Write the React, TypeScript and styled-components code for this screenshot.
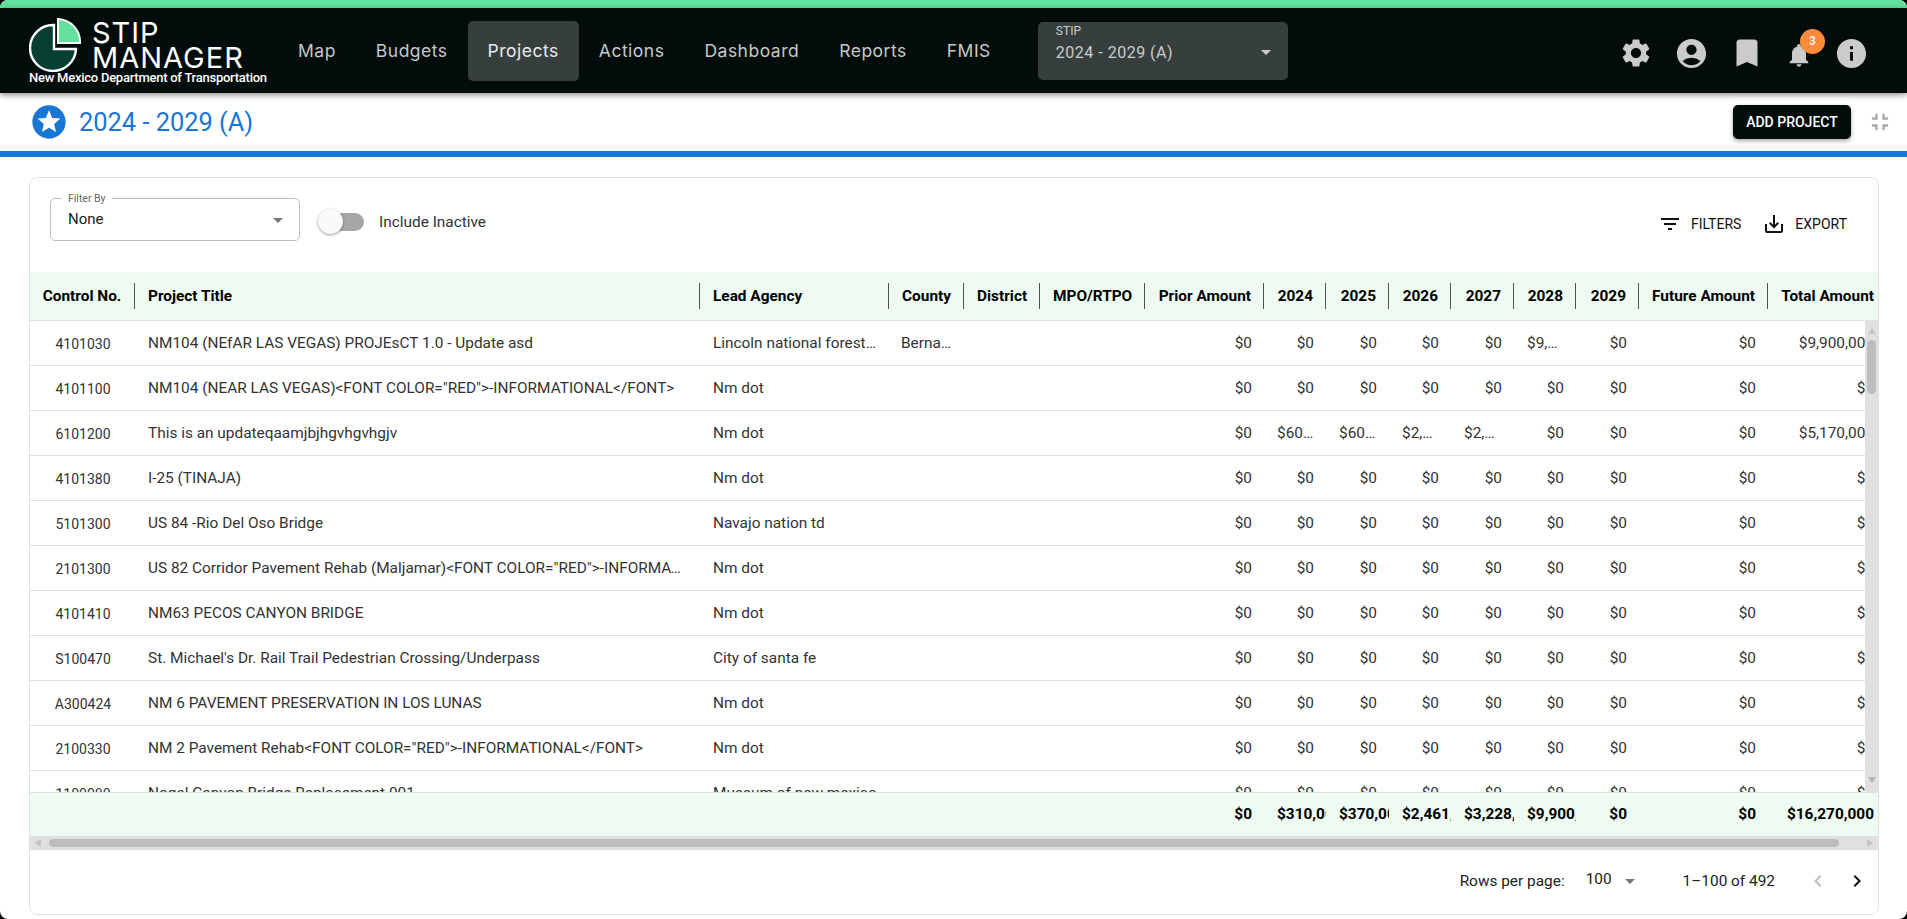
import styled, { createGlobalStyle } from 'styled-components';
import {
    MdAccountCircle,
    MdArrowDropDown,
    MdBookmark,
    MdChevronLeft,
    MdChevronRight,
    MdFilterList,
    MdFullscreenExit,
    MdInfo,
    MdNotifications,
    MdSaveAlt,
    MdSettings,
    MdStars,
} from 'react-icons/md';

const DARK = '#020c0a';
const BLUE = '#1976d2';
const MINT = '#edfbf3';
const LINE = '#e0e0e0';

const GlobalStyle = createGlobalStyle`
    html, body {
        margin: 0;
        height: 100%;
        overflow: hidden;
        background: #000;
    }
    * {
        box-sizing: border-box;
    }
`;

const Frame = styled.div`
    width: 1907px;
    height: 919px;
    border-radius: 8px;
    overflow: hidden;
    background: #fff;
    font-family: Roboto, 'Liberation Sans', sans-serif;
    display: flex;
    flex-direction: column;
`;

const TopStripe = styled.div`
    height: 8px;
    flex: none;
    background: #62e29d;
`;

const NavBar = styled.header`
    height: 85px;
    flex: none;
    display: flex;
    align-items: center;
    background: ${DARK};
    box-shadow: 0 2px 6px rgba(0, 0, 0, 0.45);
    position: relative;
    z-index: 2;
`;

const Brand = styled.div`
    width: 278px;
    flex: none;
    align-self: flex-start;
    display: flex;
    flex-direction: column;
    padding: 10px 0 0 29px;
`;

const BrandTop = styled.div`
    display: flex;
    gap: 11px;
`;

const BrandName = styled.div`
    font-family: Inter, sans-serif;
    font-size: 29px;
    line-height: 25px;
    letter-spacing: 1px;
    font-weight: 400;
    color: #fff;
    padding-top: 2px;
`;

const BrandSub = styled.div`
    margin-top: -2px;
    font-size: 13px;
    font-weight: 500;
    line-height: 16px;
    letter-spacing: -0.25px;
    white-space: nowrap;
    color: #fff;
`;

const NavLinks = styled.nav`
    display: flex;
    align-items: center;
`;

const NavLink = styled.a<{ $active?: boolean }>`
    height: 60px;
    padding: 0 20px;
    display: flex;
    align-items: center;
    border-radius: 5px;
    font-family: Inter, sans-serif;
    font-size: 17.5px;
    letter-spacing: 0.5px;
    color: ${(props) => (props.$active ? '#e9ecec' : '#c6c8c8')};
    background: ${(props) => (props.$active ? '#373f3e' : 'transparent')};
`;

const StipSelect = styled.div`
    width: 250px;
    height: 58px;
    margin-left: 27px;
    padding: 3px 10px 0 18px;
    display: flex;
    align-items: center;
    justify-content: space-between;
    border-radius: 5px;
    background: #373f3e;
    color: #c9cccc;
`;

const StipText = styled.div`
    display: flex;
    flex-direction: column;
    margin-bottom: 16px;
`;

const StipLabel = styled.span`
    font-size: 12px;
    line-height: 15px;
    margin-bottom: 4px;
`;

const StipValue = styled.span`
    font-size: 16px;
    line-height: 20px;
    letter-spacing: 0.5px;
    margin-bottom: 2px;
`;

const NavIcons = styled.div`
    margin-left: auto;
    margin-right: 38px;
    margin-top: 5px;
    display: flex;
    align-items: center;
    color: #cbcbcb;
`;

const NavIcon = styled.div<{ $size: number; $gap: number; $drop?: number }>`
    position: relative;
    display: flex;
    font-size: ${(props) => props.$size}px;
    margin-left: ${(props) => props.$gap}px;
    margin-top: ${(props) => props.$drop || 0}px;
`;

const Badge = styled.span`
    position: absolute;
    top: -12px;
    right: -12px;
    width: 25px;
    height: 25px;
    border-radius: 50%;
    background: #ff8a3a;
    color: #fff;
    font-size: 12px;
    font-weight: 500;
    display: flex;
    align-items: center;
    justify-content: center;
`;

const TitleBar = styled.div`
    height: 58px;
    flex: none;
    display: flex;
    align-items: center;
    padding: 0 13px 0 30px;
`;

const PageTitle = styled.h1`
    margin: 0 0 0 13px;
    font-size: 25.4px;
    font-weight: 400;
    color: ${BLUE};
`;

const StarIcon = styled(MdStars)`
    color: ${BLUE};
    font-size: 40px;
    margin-left: -1px;
    margin-right: -3px;
`;

const AddButton = styled.button`
    margin-left: auto;
    height: 34px;
    width: 118px;
    padding: 0;
    border: none;
    border-radius: 5px;
    background: ${DARK};
    color: #fff;
    font-family: inherit;
    font-size: 14px;
    font-weight: 500;
    box-shadow: 0 2px 4px rgba(0, 0, 0, 0.35);
`;

const CollapseIcon = styled(MdFullscreenExit)`
    margin-left: 15px;
    font-size: 28px;
    color: #aaa;
`;

const BlueRule = styled.div`
    height: 6px;
    flex: none;
    background: ${BLUE};
`;

const Content = styled.main`
    flex: 1;
    min-height: 0;
    padding: 20px 28px 4px 29px;
`;

const Card = styled.section`
    height: 100%;
    border: 1px solid ${LINE};
    border-radius: 8px;
    overflow: hidden;
    display: flex;
    flex-direction: column;
`;

const CardToolbar = styled.div`
    height: 94px;
    flex: none;
    display: flex;
    padding: 20px 31px 0 20px;
`;

const SelectBox = styled.div`
    position: relative;
    width: 250px;
    height: 43px;
    padding: 0 9px 2px 17px;
    display: flex;
    align-items: center;
    justify-content: space-between;
    border: 1px solid #bdbdbd;
    border-radius: 5px;
    font-size: 15px;
    color: #212121;
`;

const SelectCaret = styled(MdArrowDropDown)`
    font-size: 24px;
    color: #757575;
    margin-top: 3px;
`;

const SelectLegend = styled.span`
    position: absolute;
    top: -6px;
    left: 11px;
    padding: 0 6px;
    background: #fff;
    font-size: 10.5px;
    line-height: 12px;
    color: #666;
`;

const SwitchField = styled.div`
    display: flex;
    align-items: center;
    height: 47px;
    margin-left: 18px;
    font-size: 15.4px;
    color: #333;
`;

const Track = styled.div`
    position: relative;
    width: 46px;
    height: 18px;
    margin-right: 15px;
    border-radius: 9px;
    background: #a6a6a6;
`;

const Knob = styled.span`
    position: absolute;
    top: -4px;
    left: 0;
    width: 25px;
    height: 25px;
    border-radius: 50%;
    background: #fafafa;
    box-shadow: 0 1px 3px rgba(0, 0, 0, 0.4);
`;

const ToolActions = styled.div`
    margin-left: auto;
    height: 52px;
    display: flex;
    align-items: center;
    gap: 21px;
`;

const ToolAction = styled.div`
    display: flex;
    align-items: center;
    gap: 9px;
    font-size: 14px;
    color: #111;

    svg {
        font-size: 24px;
    }
`;

const GRID = '105px 565px 189px 75px 76px 105px 119px 62px 63px 62px 63px 62px 63px 129px 118px';

const TableArea = styled.div`
    flex: 1;
    min-height: 0;
    display: flex;
    flex-direction: column;
`;

const HeadRow = styled.div`
    height: 49px;
    flex: none;
    display: grid;
    grid-template-columns: ${GRID};
    background: ${MINT};
    border-bottom: 1px solid ${LINE};
`;

const HeadCell = styled.div`
    display: flex;
    align-items: center;
    min-width: 0;
    font-size: 15.4px;
    font-weight: 700;
    color: #000;
`;

const HeadLabel = styled.span<{ $align: string }>`
    flex: 1;
    padding: 0 ${(props) => (props.$align === 'center' ? '0' : '12px')} 0
        ${(props) => (props.$align === 'center' ? '0' : '13px')};
    text-align: ${(props) => props.$align};
    white-space: nowrap;
    overflow: hidden;
`;

const HeadDivider = styled.i`
    flex: none;
    width: 1px;
    height: 26px;
    background: #555;
`;

const BodyPane = styled.div`
    position: relative;
    height: 471px;
    flex: none;
    overflow: hidden;
`;

const Row = styled.div`
    height: 45px;
    display: grid;
    grid-template-columns: ${GRID};
    border-bottom: 1px solid ${LINE};
`;

const Cell = styled.div<{ $align: string }>`
    min-width: 0;
    padding: 0 12px 0 13px;
    line-height: 44px;
    font-size: 15.4px;
    color: #333;
    text-align: ${(props) => props.$align};
    white-space: nowrap;
    overflow: hidden;
    text-overflow: ellipsis;
`;

const NoCell = styled(Cell)`
    line-height: 46px;
    font-size: 14px;
`;

const CountyCell = styled(Cell)`
    padding: 0 10px 0 12px;
`;

const VScroll = styled.div`
    position: absolute;
    top: 0;
    right: 0;
    bottom: 0;
    width: 13px;
    background: #e0e0e0;
`;

const VThumb = styled.div`
    position: absolute;
    top: 19px;
    left: 2px;
    width: 9px;
    height: 54px;
    border-radius: 5px;
    background: #bdbdbd;
`;

const Arrow = styled.span<{ $dir: 'up' | 'down' | 'left' | 'right'; $off: number }>`
    position: absolute;
    width: 0;
    height: 0;
    border: 4px solid transparent;
    ${(props) =>
        props.$dir === 'up'
            ? `top: ${props.$off}px; left: 2.5px; border-bottom: 6px solid #c4c4c4; border-top: 0;`
            : props.$dir === 'down'
              ? `bottom: ${props.$off}px; left: 2.5px; border-top: 6px solid #b4b4b4; border-bottom: 0;`
              : props.$dir === 'left'
                ? `left: ${props.$off}px; top: 3px; border-right: 6px solid #c4c4c4; border-left: 0;`
                : `right: ${props.$off}px; top: 3px; border-left: 6px solid #c4c4c4; border-right: 0;`}
`;

const FootRow = styled.div`
    height: 44px;
    flex: none;
    display: grid;
    grid-template-columns: ${GRID};
    background: ${MINT};
    border-top: 1px solid ${LINE};
`;

const FootCell = styled.div`
    min-width: 0;
    padding: 0 12px 0 13px;
    line-height: 42px;
    font-size: 15.4px;
    font-weight: 700;
    color: #000;
    text-align: right;
    white-space: nowrap;
    overflow: hidden;
`;

const HScroll = styled.div`
    position: relative;
    height: 14px;
    flex: none;
    background: #e0e0e0;
`;

const HThumb = styled.div`
    position: absolute;
    top: 3px;
    left: 19px;
    right: 39px;
    height: 8px;
    border-radius: 4px;
    background: #bdbdbd;
`;

const Pagination = styled.div`
    flex: 1;
    display: flex;
    align-items: center;
    padding: 0 9px 3px 0;
    justify-content: flex-end;
    font-size: 15.4px;
    color: #212121;
`;

const PerPage = styled.div`
    display: flex;
    align-items: center;
    margin: 0 41px 0 21px;

    span {
        margin-bottom: 4px;
    }

    svg {
        font-size: 24px;
        color: #757575;
        margin-left: 6px;
    }
`;

const PageRange = styled.span`
    margin-right: 31px;
`;

const PageButton = styled.div<{ $disabled?: boolean }>`
    display: flex;
    font-size: 24px;
    margin-left: ${(props) => (props.$disabled ? '0' : '15px')};
    color: ${(props) => (props.$disabled ? '#bdbdbd' : '#111')};
`;

const columns = [
    { label: 'Control No.', align: 'center' },
    { label: 'Project Title', align: 'left' },
    { label: 'Lead Agency', align: 'left' },
    { label: 'County', align: 'left' },
    { label: 'District', align: 'left' },
    { label: 'MPO/RTPO', align: 'left' },
    { label: 'Prior Amount', align: 'right' },
    { label: '2024', align: 'right' },
    { label: '2025', align: 'right' },
    { label: '2026', align: 'right' },
    { label: '2027', align: 'right' },
    { label: '2028', align: 'right' },
    { label: '2029', align: 'right' },
    { label: 'Future Amount', align: 'right' },
    { label: 'Total Amount', align: 'right' },
];

const zeros = ['$0', '$0', '$0', '$0', '$0', '$0', '$0', '$0', '$0'];

const rows = [
    {
        no: '4101030',
        title: 'NM104 (NEfAR LAS VEGAS) PROJEsCT 1.0 - Update asd',
        agency: 'Lincoln national forest service',
        county: 'Bernalillo',
        money: ['$0', '$0', '$0', '$0', '$0', '$9,900,000', '$0', '$0', '$9,900,000'],
    },
    {
        no: '4101100',
        title: 'NM104 (NEAR LAS VEGAS)<FONT COLOR="RED">-INFORMATIONAL</FONT>',
        agency: 'Nm dot',
        money: zeros,
    },
    {
        no: '6101200',
        title: 'This is an updateqaamjbjhgvhgvhgjv',
        agency: 'Nm dot',
        money: ['$0', '$60,000', '$60,000', '$2,525,000', '$2,525,000', '$0', '$0', '$0', '$5,170,000'],
    },
    { no: '4101380', title: 'I-25 (TINAJA)', agency: 'Nm dot', money: zeros },
    { no: '5101300', title: 'US 84 -Rio Del Oso Bridge', agency: 'Navajo nation td', money: zeros },
    {
        no: '2101300',
        title: 'US 82 Corridor Pavement Rehab (Maljamar)<FONT COLOR="RED">-INFORMATIONAL</FONT>',
        agency: 'Nm dot',
        money: zeros,
    },
    { no: '4101410', title: 'NM63 PECOS CANYON BRIDGE', agency: 'Nm dot', money: zeros },
    {
        no: 'S100470',
        title: "St. Michael's Dr. Rail Trail Pedestrian Crossing/Underpass",
        agency: 'City of santa fe',
        money: zeros,
    },
    { no: 'A300424', title: 'NM 6 PAVEMENT PRESERVATION IN LOS LUNAS', agency: 'Nm dot', money: zeros },
    {
        no: '2100330',
        title: 'NM 2 Pavement Rehab<FONT COLOR="RED">-INFORMATIONAL</FONT>',
        agency: 'Nm dot',
        money: zeros,
    },
    { no: '1100080', title: 'Nogal Canyon Bridge Replacement 001', agency: 'Museum of new mexico', money: zeros },
];

const totals = ['$0', '$310,000', '$370,000', '$2,461,500', '$3,228,500', '$9,900,000', '$0', '$0', '$16,270,000'];

const navItems = ['Map', 'Budgets', 'Projects', 'Actions', 'Dashboard', 'Reports', 'FMIS'];

const LogoMark = () => (
    <svg width="52" height="54" viewBox="0 0 52 54" style={{ flex: 'none' }}>
        <path d="M25 7 A23 23 0 1 0 47 31 L25 31 Z" fill="#053f31" stroke="#fff" strokeWidth="2.4" />
        <path d="M29 1 A23 23 0 0 1 51 25 L29 25 Z" fill="#62e29d" stroke="#fff" strokeWidth="2" />
    </svg>
);

const App = () => {
    return (
        <Frame>
            <GlobalStyle />
            <TopStripe />
            <NavBar>
                <Brand>
                    <BrandTop>
                        <LogoMark />
                        <BrandName>
                            STIP
                            <br />
                            MANAGER
                        </BrandName>
                    </BrandTop>
                    <BrandSub>New Mexico Department of Transportation</BrandSub>
                </Brand>
                <NavLinks>
                    {navItems.map((item) => (
                        <NavLink key={item} $active={item === 'Projects'}>
                            {item}
                        </NavLink>
                    ))}
                </NavLinks>
                <StipSelect>
                    <StipText>
                        <StipLabel>STIP</StipLabel>
                        <StipValue>2024 - 2029 (A)</StipValue>
                    </StipText>
                    <MdArrowDropDown size={24} />
                </StipSelect>
                <NavIcons>
                    <NavIcon $size={34} $gap={0}>
                        <MdSettings />
                    </NavIcon>
                    <NavIcon $size={35} $gap={21}>
                        <MdAccountCircle />
                    </NavIcon>
                    <NavIcon $size={36} $gap={20}>
                        <MdBookmark />
                    </NavIcon>
                    <NavIcon $size={28} $gap={20} $drop={3}>
                        <MdNotifications />
                        <Badge>3</Badge>
                    </NavIcon>
                    <NavIcon $size={35} $gap={21}>
                        <MdInfo />
                    </NavIcon>
                </NavIcons>
            </NavBar>
            <TitleBar>
                <StarIcon />
                <PageTitle>2024 - 2029 (A)</PageTitle>
                <AddButton>ADD PROJECT</AddButton>
                <CollapseIcon />
            </TitleBar>
            <BlueRule />
            <Content>
                <Card>
                    <CardToolbar>
                        <SelectBox>
                            <SelectLegend>Filter By</SelectLegend>
                            None
                            <SelectCaret />
                        </SelectBox>
                        <SwitchField>
                            <Track>
                                <Knob />
                            </Track>
                            Include Inactive
                        </SwitchField>
                        <ToolActions>
                            <ToolAction>
                                <MdFilterList />
                                FILTERS
                            </ToolAction>
                            <ToolAction>
                                <MdSaveAlt />
                                EXPORT
                            </ToolAction>
                        </ToolActions>
                    </CardToolbar>
                    <TableArea>
                        <HeadRow>
                            {columns.map((column, index) => (
                                <HeadCell key={column.label}>
                                    <HeadLabel $align={column.align}>{column.label}</HeadLabel>
                                    {index < columns.length - 1 && <HeadDivider />}
                                </HeadCell>
                            ))}
                        </HeadRow>
                        <BodyPane>
                            {rows.map((row) => (
                                <Row key={row.no}>
                                    <NoCell $align="center">{row.no}</NoCell>
                                    <Cell $align="left">{row.title}</Cell>
                                    <Cell $align="left">{row.agency}</Cell>
                                    <CountyCell $align="left">{row.county}</CountyCell>
                                    <Cell $align="left" />
                                    <Cell $align="left" />
                                    {row.money.map((amount, index) => (
                                        <Cell key={index} $align="right">
                                            {amount}
                                        </Cell>
                                    ))}
                                </Row>
                            ))}
                            <VScroll>
                                <Arrow $dir="up" $off={7} />
                                <VThumb />
                                <Arrow $dir="down" $off={9} />
                            </VScroll>
                        </BodyPane>
                        <FootRow>
                            <span />
                            <span />
                            <span />
                            <span />
                            <span />
                            <span />
                            {totals.map((amount, index) => (
                                <FootCell key={index}>{amount}</FootCell>
                            ))}
                        </FootRow>
                        <HScroll>
                            <Arrow $dir="left" $off={5} />
                            <HThumb />
                            <Arrow $dir="right" $off={5} />
                        </HScroll>
                        <Pagination>
                            Rows per page:
                            <PerPage>
                                <span>100</span>
                                <MdArrowDropDown />
                            </PerPage>
                            <PageRange>1–100 of 492</PageRange>
                            <PageButton $disabled>
                                <MdChevronLeft />
                            </PageButton>
                            <PageButton>
                                <MdChevronRight />
                            </PageButton>
                        </Pagination>
                    </TableArea>
                </Card>
            </Content>
        </Frame>
    );
};

export default App;
